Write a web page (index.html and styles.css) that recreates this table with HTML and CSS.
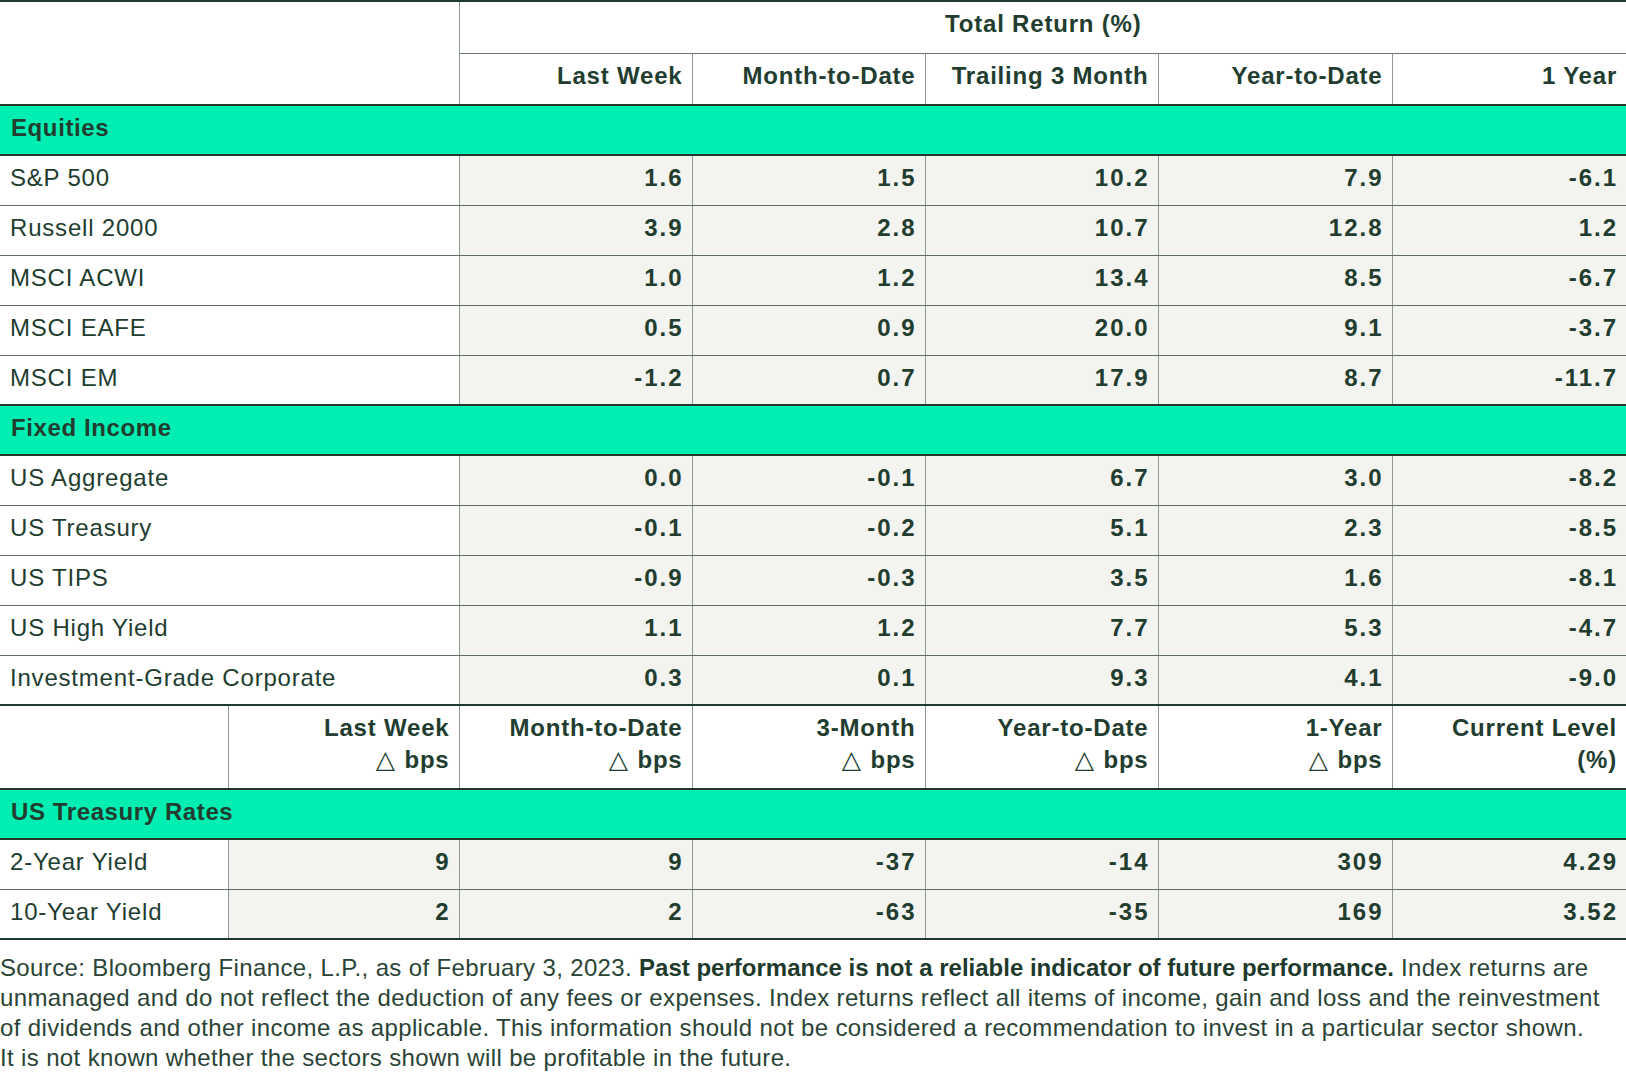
FILE: index.html
```html
<!DOCTYPE html>
<html lang="en">
<head>
<meta charset="utf-8">
<title>Total Return</title>
<link rel="stylesheet" href="styles.css">
</head>
<body>
<table class="perf">
  <colgroup>
    <col class="c1"><col class="c2"><col class="c3"><col class="c4"><col class="c5"><col class="c6"><col class="c7">
  </colgroup>
  <thead>
    <tr class="h1">
      <th class="blank" colspan="2" rowspan="2"></th>
      <th class="group" colspan="5">Total Return (%)</th>
    </tr>
    <tr class="h2">
      <th class="col">Last Week</th>
      <th class="col">Month-to-Date</th>
      <th class="col">Trailing 3 Month</th>
      <th class="col">Year-to-Date</th>
      <th class="col">1 Year</th>
    </tr>
  </thead>
  <tbody>
    <tr class="band"><td colspan="7">Equities</td></tr>
    <tr class="row"><td class="label" colspan="2">S&amp;P 500</td><td class="num">1.6</td><td class="num">1.5</td><td class="num">10.2</td><td class="num">7.9</td><td class="num">-6.1</td></tr>
    <tr class="row"><td class="label" colspan="2">Russell 2000</td><td class="num">3.9</td><td class="num">2.8</td><td class="num">10.7</td><td class="num">12.8</td><td class="num">1.2</td></tr>
    <tr class="row"><td class="label" colspan="2">MSCI ACWI</td><td class="num">1.0</td><td class="num">1.2</td><td class="num">13.4</td><td class="num">8.5</td><td class="num">-6.7</td></tr>
    <tr class="row"><td class="label" colspan="2">MSCI EAFE</td><td class="num">0.5</td><td class="num">0.9</td><td class="num">20.0</td><td class="num">9.1</td><td class="num">-3.7</td></tr>
    <tr class="row"><td class="label" colspan="2">MSCI EM</td><td class="num">-1.2</td><td class="num">0.7</td><td class="num">17.9</td><td class="num">8.7</td><td class="num">-11.7</td></tr>
    <tr class="band"><td colspan="7">Fixed Income</td></tr>
    <tr class="row"><td class="label" colspan="2">US Aggregate</td><td class="num">0.0</td><td class="num">-0.1</td><td class="num">6.7</td><td class="num">3.0</td><td class="num">-8.2</td></tr>
    <tr class="row"><td class="label" colspan="2">US Treasury</td><td class="num">-0.1</td><td class="num">-0.2</td><td class="num">5.1</td><td class="num">2.3</td><td class="num">-8.5</td></tr>
    <tr class="row"><td class="label" colspan="2">US TIPS</td><td class="num">-0.9</td><td class="num">-0.3</td><td class="num">3.5</td><td class="num">1.6</td><td class="num">-8.1</td></tr>
    <tr class="row"><td class="label" colspan="2">US High Yield</td><td class="num">1.1</td><td class="num">1.2</td><td class="num">7.7</td><td class="num">5.3</td><td class="num">-4.7</td></tr>
    <tr class="row"><td class="label" colspan="2">Investment-Grade Corporate</td><td class="num">0.3</td><td class="num">0.1</td><td class="num">9.3</td><td class="num">4.1</td><td class="num">-9.0</td></tr>
    <tr class="h3">
      <th class="blank"></th>
      <th class="col">Last Week<br><span class="delta">&#9651;</span> bps</th>
      <th class="col">Month-to-Date<br><span class="delta">&#9651;</span> bps</th>
      <th class="col">3-Month<br><span class="delta">&#9651;</span> bps</th>
      <th class="col">Year-to-Date<br><span class="delta">&#9651;</span> bps</th>
      <th class="col">1-Year<br><span class="delta">&#9651;</span> bps</th>
      <th class="col">Current Level<br>(%)</th>
    </tr>
    <tr class="band"><td colspan="7">US Treasury Rates</td></tr>
    <tr class="row"><td class="label">2-Year Yield</td><td class="num">9</td><td class="num">9</td><td class="num">-37</td><td class="num">-14</td><td class="num">309</td><td class="num">4.29</td></tr>
    <tr class="row"><td class="label">10-Year Yield</td><td class="num">2</td><td class="num">2</td><td class="num">-63</td><td class="num">-35</td><td class="num">169</td><td class="num">3.52</td></tr>
  </tbody>
</table>
<p class="note">Source: Bloomberg Finance, L.P., as of February 3, 2023. <strong>Past performance is not a reliable indicator of future performance.</strong> Index returns are<br>unmanaged and do not reflect the deduction of any fees or expenses. Index returns reflect all items of income, gain and loss and the reinvestment<br>of dividends and other income as applicable. This information should not be considered a recommendation to invest in a particular sector shown.<br>It is not known whether the sectors shown will be profitable in the future.</p>
</body>
</html>
```
FILE: styles.css
```css
html, body {
  margin: 0;
  padding: 0;
  background: #ffffff;
}

body {
  font-family: "Liberation Sans", Arial, sans-serif;
  color: #223d30;
  width: 1626px;
}

.perf {
  width: 1626px;
  border-collapse: collapse;
  table-layout: fixed;
  border-top: 2px solid #1f3a2c;
}

.c1 { width: 228px; }
.c2 { width: 231px; }
.c3 { width: 233px; }
.c4 { width: 233px; }
.c5 { width: 233px; }
.c6 { width: 234px; }
.c7 { width: 234px; }

.perf th,
.perf td {
  padding: 0 10px 4px 10px;
  font-size: 24px;
  line-height: 30px;
  white-space: nowrap;
}

.perf th {
  font-weight: bold;
  text-align: right;
  background: #ffffff;
  letter-spacing: 0.8px;
  padding-bottom: 6px;
  padding-right: 9px;
}

.h1 { height: 52px; }
.h2 { height: 52px; }

.blank {
  border-right: 1px solid #8f9993;
}

.group {
  text-align: center !important;
  border-bottom: 1px solid #6a7971;
}

.col {
  border-left: 1px solid #8f9993;
}

.h3 {
  height: 84px;
}

.h3 th {
  line-height: 32px;
  border-top: 2px solid #1f3a2c;
}

.delta {
  font-family: "DejaVu Sans", sans-serif;
  font-weight: normal;
  font-size: 25px;
  letter-spacing: 0;
  margin-right: 2px;
}

.band { height: 50px; }

.band td {
  height: 44px;
  background: #00eeb1;
  border-top: 2px solid #1f3a2c;
  border-bottom: 2px solid #1f3a2c;
  font-weight: bold;
  padding-left: 11px;
  letter-spacing: 0.6px;
}

.row { height: 50px; }

.row td {
  border-bottom: 1px solid #5e6d65;
}

.label {
  padding-left: 11px;
  text-align: left;
  letter-spacing: 0.8px;
}

.num {
  background: #f3f3ef;
  border-left: 1px solid #8f9993;
  text-align: right;
  font-weight: bold;
  letter-spacing: 2px;
  padding-right: 8px !important;
}

tbody tr:last-child td {
  border-bottom: 2px solid #1f3a2c;
}

.note {
  margin: 13px 0 0 0;
  font-size: 24px;
  line-height: 30px;
  color: #2a4336;
  white-space: nowrap;
  letter-spacing: 0.36px;
}

.note strong {
  color: #1f3a2c;
  letter-spacing: 0;
}
```
